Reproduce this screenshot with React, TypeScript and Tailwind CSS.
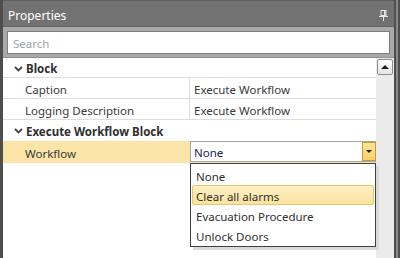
import React from "react";

const font = { fontFamily: '"Noto Sans", "Open Sans", sans-serif' };

interface Row {
  label: string;
  value: string;
}

const blockRows: Row[] = [
  { label: "Caption", value: "Execute Workflow" },
  { label: "Logging Description", value: "Execute Workflow" },
];

const options = ["None", "Clear all alarms", "Evacuation Procedure", "Unlock Doors"];

const Chevron = () => (
  <svg width="9" height="6" viewBox="0 0 9 6" className="text-[#444]">
    <path d="M1 1 L4.5 4.5 L8 1" fill="none" stroke="currentColor" strokeWidth="1.8" />
  </svg>
);

const CategoryRow = ({ title, border }: { title: string; border?: boolean }) => (
  <div
    className={`flex items-center h-[20px] pl-[7px] ${border ? "border-b border-[#dcdcdc]" : ""}`}
  >
    <span className="w-[16px] flex justify-center pt-[2px]">
      <Chevron />
    </span>
    <span className="text-[11.5px] font-bold text-[#2f2f2f] pt-[3px]">{title}</span>
  </div>
);

const PropRow = ({ label, value }: Row) => (
  <div className="flex h-[21px] border-b border-[#dcdcdc]">
    <div className="w-[187px] pl-[22px] pt-[3px] border-r border-[#dcdcdc] flex items-center text-[11.5px] text-[#3a3a3a]">
      {label}
    </div>
    <div className="flex-1 pl-[4px] pt-[3px] flex items-center text-[11.5px] text-[#3a3a3a]">{value}</div>
  </div>
);

export default function App() {
  return (
    <div className="w-[400px] h-[258px] flex bg-white overflow-hidden" style={font}>
      {/* left edge */}
      <div className="w-[3px] bg-[#4e4e4e]" />

      <div className="flex-1 flex flex-col">
        {/* Title bar */}
        <div className="h-[27px] bg-[#727272] border-t border-[#5c5c5c] border-b border-b-[#666] flex items-center justify-between pl-[5px] pr-[6px] pt-[4px]">
          <span className="text-white text-[12px]">Properties</span>
          <svg width="9" height="11" viewBox="0 0 9 11" className="text-[#e6e6e6]">
            <rect x="2" y="0.5" width="5" height="5" fill="none" stroke="currentColor" />
            <rect x="5" y="1" width="1.5" height="4.5" fill="currentColor" />
            <rect x="0" y="6" width="9" height="1" fill="currentColor" />
            <rect x="4" y="7" width="1" height="4" fill="currentColor" />
          </svg>
        </div>

        {/* Search */}
        <div className="h-[31px] bg-[#a9a9a9] flex items-center pl-[4px] pr-[4px] border-b border-[#8f8f8f]">
          <div className="flex-1 h-[23px] bg-white border border-[#7d7d7d] flex items-center pl-[5px] pt-[3px] text-[11.5px] text-[#a0a4ab]">
            Search
          </div>
        </div>

        {/* Grid + scrollbar */}
        <div className="flex-1 flex">
          <div className="flex-1 relative">
            <CategoryRow title="Block" border />
            {blockRows.map((r) => (
              <PropRow key={r.label} {...r} />
            ))}
            <CategoryRow title="Execute Workflow Block" />

            {/* Selected workflow row */}
            <div className="flex h-[22px] mt-[1px] bg-[#fbe4a8]">
              <div className="w-[187px] pl-[22px] pt-[3px] flex items-center text-[11.5px] text-[#3a3a3a]">
                Workflow
              </div>
              <div className="flex-1 flex bg-white border border-[#a7a7a7] border-r-0 h-[21px]">
                <div className="flex-1 pl-[3px] pt-[3px] flex items-center text-[11.5px] text-[#1d2450]">None</div>
                <div className="w-[14px] bg-gradient-to-b from-[#fde49a] to-[#fbcf66] border border-[#c39a3c] flex items-center justify-center">
                  <svg width="6" height="3" viewBox="0 0 6 3">
                    <path d="M0 0 L6 0 L3 3 Z" fill="#222" />
                  </svg>
                </div>
              </div>
            </div>

            {/* Dropdown popup */}
            <div className="absolute left-[187px] top-[105px] w-[186px] h-[84px] bg-white border border-[#404040] shadow-[3px_3px_0_0_#d9d9d9] py-[1px] px-[1px]">
              {options.map((o) => (
                <div
                  key={o}
                  className={`h-[20px] flex items-center pl-[3px] pt-[3px] text-[11.5px] text-[#2f2f2f] rounded-[2px] border ${
                    o === "Clear all alarms"
                      ? "bg-gradient-to-b from-[#fdf0c4] to-[#fbe39f] border-[#e6c66c]"
                      : "border-transparent"
                  }`}
                >
                  {o}
                </div>
              ))}
            </div>
          </div>

          {/* Scrollbar */}
          <div className="w-[18px] bg-[#ebebeb] pt-[1px] pl-[1px]">
            <div className="w-[16px] h-[16px] rounded-[2px] border border-[#8c8c8c] bg-gradient-to-b from-white to-[#e4e4e4] flex items-center justify-center">
              <svg width="8" height="4" viewBox="0 0 8 4">
                <path d="M0 4 L8 4 L4 0 Z" fill="#1e1e1e" />
              </svg>
            </div>
          </div>
        </div>
      </div>

      {/* right edge */}
      <div className="w-[6px] flex">
        <div className="w-[2px] bg-[#4e4e4e]" />
        <div className="w-[2px] bg-[#8a8a8a]" />
        <div className="w-[2px] bg-[#4e4e4e]" />
      </div>
    </div>
  );
}
